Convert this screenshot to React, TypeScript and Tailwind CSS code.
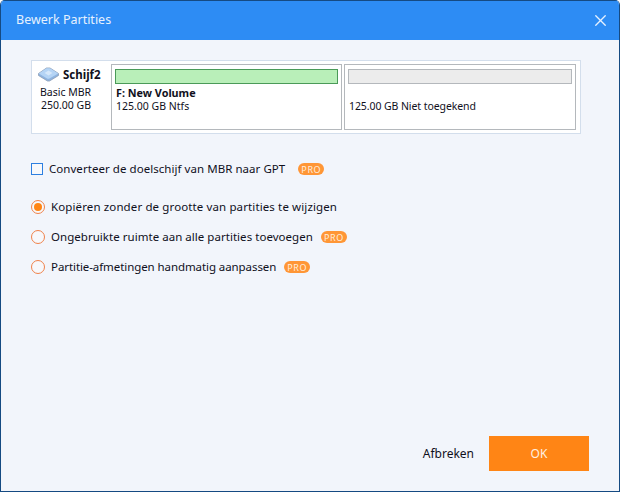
import { X } from "lucide-react";

const FONT = "[font-family:'Noto_Sans','DejaVu_Sans',sans-serif]";

function ProBadge({ gap }: { gap: string }) {
  return (
    <span className={`flex h-3 w-[26px] items-center justify-center rounded-full bg-[#ff9636] text-[9px] leading-none tracking-[0.6px] text-[#ffeedd] ${gap}`}>
      PRO
    </span>
  );
}

function Radio({ label, spacing, checked, pro }: { label: string; spacing: string; checked?: boolean; pro?: boolean }) {
  return (
    <div className="flex h-[14px] items-center">
      <span className="flex h-[14px] w-[14px] shrink-0 items-center justify-center rounded-full border border-[#f0824a] bg-[#f7f8fb]">
        {checked && <span className="h-2 w-2 rounded-full bg-[#ff8515]" />}
      </span>
      <span className={`ml-[6px] whitespace-nowrap text-[11.5px] leading-[14px] text-[#10101c] ${spacing}`}>{label}</span>
      {pro && <ProBadge gap="ml-2" />}
    </div>
  );
}

function DiskIcon() {
  return (
    <svg width="21" height="15" viewBox="0 0 21 15">
      <path d="M0.5 6.5 L8.5 1 L12 1 L20.5 6.5 L20.5 8.5 L11.5 14 L9.5 14 L0.5 8.5 Z" fill="#8fb4e0" stroke="#8c9cb4" strokeWidth="0.8" />
      <path d="M0.8 6.5 L8.5 1.2 L12 1.2 L20.2 6.5 L11 11.8 L9.5 11.8 Z" fill="#b5d4f5" />
      <path d="M6.5 6 L10.5 3.5 L14.5 6 L10.5 8.5 Z" fill="#d5e7fa" />
    </svg>
  );
}

export default function App() {
  return (
    <div className={`flex h-[492px] w-[620px] flex-col overflow-hidden rounded-t-[5px] border-x border-b border-[#154a82] bg-[#f2f5fb] ${FONT}`}>
      {/* Title bar */}
      <div className="flex h-10 shrink-0 items-center justify-between border-t border-[#154a82] bg-[#2d8cf4] pl-[15px] pr-[9px]">
        <span className="text-[12.5px] text-[#e6f1fe]">Bewerk Partities</span>
        <X size={19} strokeWidth={1.7} className="text-[#e6f1fe]" />
      </div>

      <div className="flex flex-1 flex-col px-[30px] pt-5">
        {/* Disk panel */}
        <div className="flex h-[74px] w-[550px] border border-[#d3deec] bg-white p-[3px]">
          <div className="w-[76px] shrink-0 text-[10.5px] leading-[13px] text-[#10101c]">
            <div className="flex h-[20px] items-center pl-[3px]">
              <DiskIcon />
              <span className="ml-[4px] text-[11.5px] font-bold">Schijf2</span>
            </div>
            <div className="mt-[2px] pl-[5px] whitespace-nowrap">Basic MBR</div>
            <div className="pl-[6px] whitespace-nowrap">250.00 GB</div>
          </div>
          <div className="h-full w-[231px] border border-[#b4b8bc] px-[3px] pt-[4px]">
            <div className="h-[15px] border border-[#4a9a58] bg-[#b9efb9]" />
            <div className="mt-[2px] pl-px text-[10.5px] leading-[13px] text-[#10101c]">
              <div className="text-[10.8px] font-bold">F: New Volume</div>
              <div className="mt-px">125.00 GB Ntfs</div>
            </div>
          </div>
          <div className="ml-[2px] h-full w-[232px] border border-[#b4b8bc] px-[3px] pt-[4px]">
            <div className="h-[15px] border border-[#b4b8bc] bg-[#ececec]" />
            <div className="mt-[16px] pl-[1px] text-[10.5px] leading-[13px] tracking-[-0.08px] text-[#10101c]">125.00 GB Niet toegekend</div>
          </div>
        </div>

        {/* Convert option */}
        <div className="mt-[28px] flex h-[14px] items-center">
          <span className="h-3 w-3 shrink-0 border border-[#2d7fe0] bg-[#f7f8fb]" />
          <span className="ml-[6px] whitespace-nowrap text-[11.5px] leading-[14px] tracking-[0.05px] text-[#10101c]">
            Converteer de doelschijf van MBR naar GPT
          </span>
          <ProBadge gap="ml-[13px]" />
        </div>

        {/* Copy mode */}
        <div className="mt-[24px] flex flex-col gap-[16px]">
          <Radio checked spacing="tracking-[0.12px]" label="Kopiëren zonder de grootte van partities te wijzigen" />
          <Radio pro spacing="tracking-[0.035px]" label="Ongebruikte ruimte aan alle partities toevoegen" />
          <Radio pro spacing="tracking-[-0.08px]" label="Partitie-afmetingen handmatig aanpassen" />
        </div>

        {/* Actions */}
        <div className="mt-auto mb-[20px] flex items-center justify-end">
          <span className="mr-[15px] text-[12px] text-[#10101c]">Afbreken</span>
          <button className="h-[35px] w-[100px] bg-[#ff8515] text-[12px] text-[#fff0e0]">OK</button>
        </div>
      </div>
    </div>
  );
}
